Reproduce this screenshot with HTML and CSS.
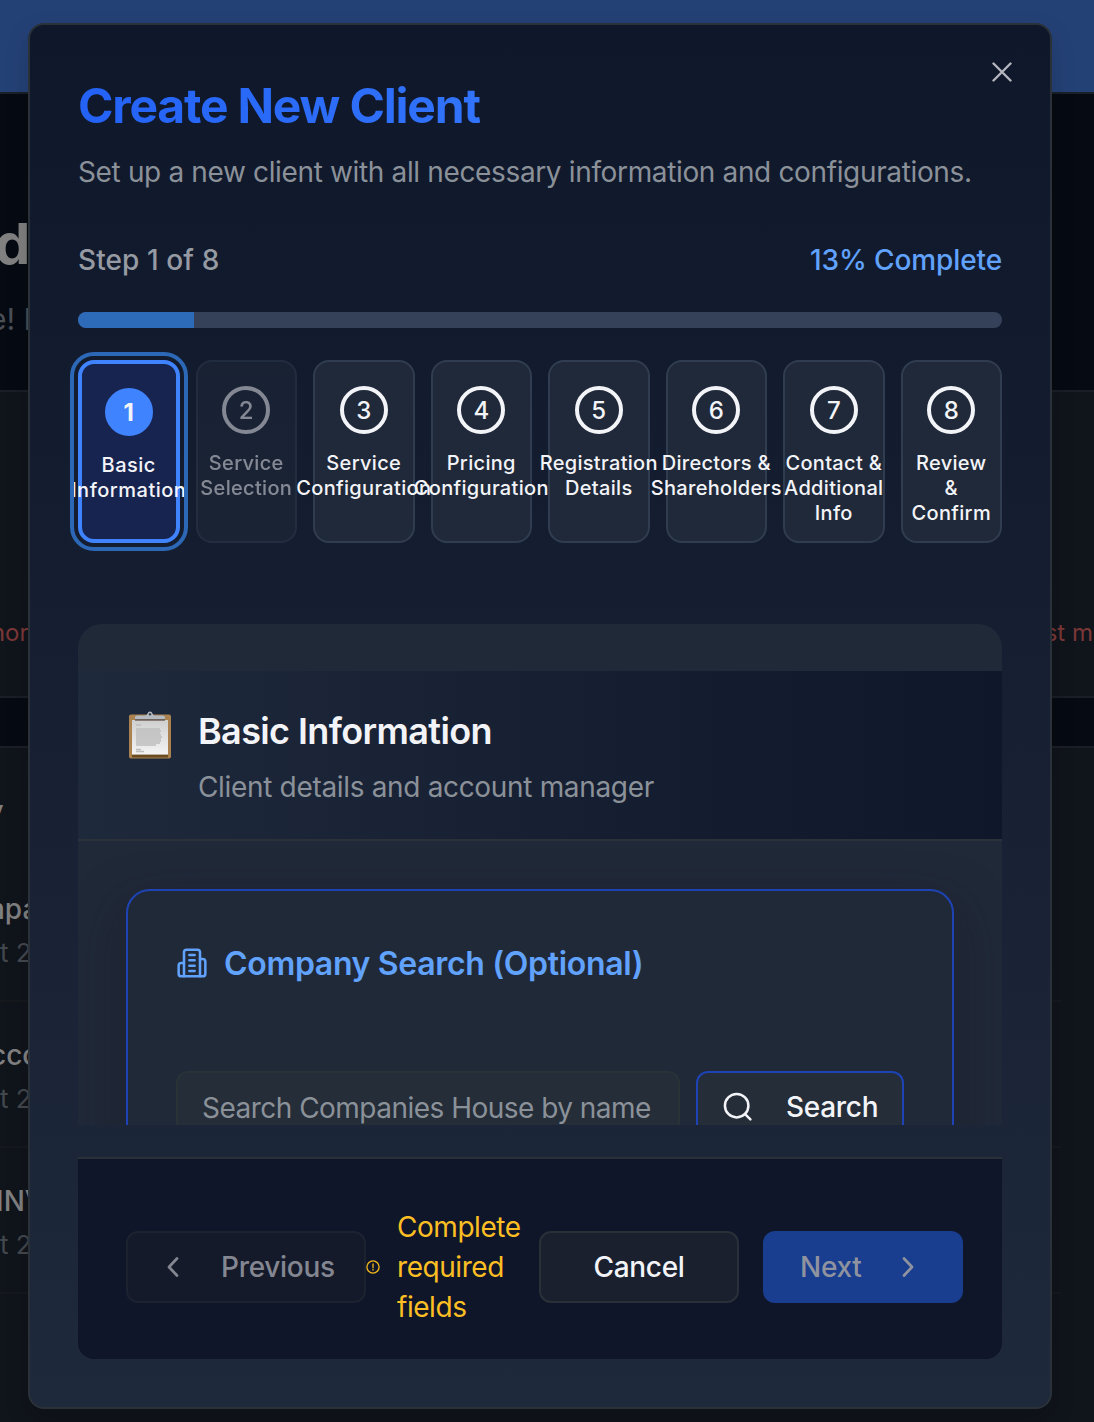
FILE: index.html
```html
<!DOCTYPE html>
<html lang="en">
<head>
<meta charset="utf-8">
<title>Create New Client</title>
<link rel="stylesheet" href="styles.css">
</head>
<body>
<div class="page" aria-hidden="true">
  <div class="page-top"></div>
  <div class="page-intro">
    <div class="page-title">d</div>
    <div class="page-sub">e! H</div>
  </div>
  <div class="page-stats">
    <span class="trend-left">mor</span>
    <span class="trend-right">st m</span>
  </div>
  <div class="page-list">
    <div class="list-title">y</div>
    <div class="list-row"><div class="row-name n1">mpa</div><div class="row-date">t 2</div></div>
    <div class="list-row"><div class="row-name n2">cco</div><div class="row-date">t 2</div></div>
    <div class="list-row"><div class="row-name n3">INV</div><div class="row-date">t 2</div></div>
  </div>
</div>

<div class="modal" role="dialog">
  <button class="close" aria-label="Close"><svg width="20" height="20" viewBox="0 0 20 20"><path d="M1.5 1.5l17 17M18.5 1.5l-17 17"/></svg></button>
  <h1 class="title"><span>Create New Client</span></h1>
  <p class="lead">Set up a new client with all necessary information and configurations.</p>
  <div class="progress-text"><span class="step-count">Step 1 of 8</span><span class="percent">13% Complete</span></div>
  <div class="bar"><div class="bar-fill" style="width:12.5%"></div></div>
  <div class="steps">
    <div class="step active"><b class="num">1</b><div class="label">Basic<br>Information</div></div>
    <div class="step disabled"><b class="num">2</b><div class="label">Service<br>Selection</div></div>
    <div class="step"><b class="num">3</b><div class="label">Service<br>Configuration</div></div>
    <div class="step"><b class="num">4</b><div class="label">Pricing<br>Configuration</div></div>
    <div class="step"><b class="num">5</b><div class="label">Registration<br>Details</div></div>
    <div class="step"><b class="num">6</b><div class="label">Directors &amp;<br>Shareholders</div></div>
    <div class="step"><b class="num">7</b><div class="label">Contact &amp;<br>Additional<br>Info</div></div>
    <div class="step"><b class="num">8</b><div class="label">Review<br>&amp;<br>Confirm</div></div>
  </div>

  <div class="form-scroll">
    <div class="section-head">
      <svg class="clipboard" width="44" height="50" viewBox="0 0 44 50">
        <defs><linearGradient id="paper" x1="0" y1="0" x2="0" y2="1"><stop offset="0" stop-color="#cfcfcf"/><stop offset="1" stop-color="#f4f4f4"/></linearGradient></defs>
        <rect x="1" y="3.500" width="42" height="44" rx="2" fill="#a98250"/>
        <rect x="4" y="43.500" width="36" height="3" fill="#6b4c22"/>
        <rect x="4" y="9" width="36" height="34.500" fill="url(#paper)"/>
        <path d="M8 14h5M8 18h24M8 20h25M8 22h24M8 24h25M8 26h26M8 28h25M8 30h25M8 32h24M8 34h20M8 38.500h5M8 40.500h8" stroke="#bdbdbd" stroke-width="1.300"/>
        <path d="M7 9V6.500q0-2 3-2h7q2 0 2.500-2a2.600 2.600 0 0 1 5 0q.5 2 2.500 2h7q3 0 3 2V9z" fill="#b4bac0"/>
        <path d="M7 8.800h30" stroke="#6f6259" stroke-width="1.800"/>
        <circle cx="22" cy="3.200" r="1.200" fill="#39434d"/>
      </svg>
      <div>
        <h2 class="section-title">Basic Information</h2>
        <p class="section-sub">Client details and account manager</p>
      </div>
    </div>
    <div class="search-card">
      <h3 class="card-title">
        <svg width="32" height="32" viewBox="0 0 24 24" class="line-icon"><path d="M6 22V4a2 2 0 0 1 2-2h8a2 2 0 0 1 2 2v18Z"/><path d="M6 12H4a2 2 0 0 0-2 2v6a2 2 0 0 0 2 2h2M18 9h2a2 2 0 0 1 2 2v9a2 2 0 0 1-2 2h-2M10 6h4M10 10h4M10 14h4M10 18h4"/></svg>
        <span>Company Search (Optional)</span>
      </h3>
      <div class="search-row">
        <div class="input"><span>Search Companies House by name</span></div>
        <div class="search-btn"><svg width="32" height="32" viewBox="0 0 24 24" class="line-icon"><circle cx="11" cy="11" r="8.800"/><path d="m21.300 21.300-4-4"/></svg><span>Search</span></div>
      </div>
    </div>
  </div>

  <div class="footer">
    <button class="btn prev"><svg width="12" height="20" viewBox="0 0 12 20"><path d="M10 1.500L2 10l8 8.500"/></svg><span>Previous</span></button>
    <svg class="warn-icon" width="14" height="14" viewBox="0 0 14 14"><circle cx="7" cy="7" r="6.100"/><path d="M7 4v3.400M7 9.200v.9"/></svg>
    <div class="warn">Complete required fields</div>
    <button class="btn cancel"><span>Cancel</span></button>
    <button class="btn next"><span>Next</span><svg width="12" height="20" viewBox="0 0 12 20"><path d="M2 1.500L10 10l-8 8.500"/></svg></button>
  </div>
</div>
</body>
</html>
```

FILE: styles.css
```css
* { box-sizing: border-box; }
body { margin: 0; width: 1094px; height: 1422px; overflow: hidden; position: relative; background: #060a12; font-family: Inter, "Liberation Sans", sans-serif; color: #f3f4f8; }
h1, h2, h3, p { margin: 0; }
button { font: inherit; letter-spacing: inherit; color: inherit; padding: 0; }

.page { height: 1422px; overflow: hidden; white-space: nowrap; }
.page-top { height: 94px; background: #244176; border-bottom: 2px solid #1b1f27; }
.page-intro { height: 296px; padding-top: 114px; }
.page-title { font-size: 56px; font-weight: 700; line-height: 72px; color: #808080; margin-left: -5px; }
.page-sub { font-size: 30px; line-height: 40px; color: #4a4e55; margin: 19px 0 0 -11px; }
.page-stats { height: 308px; border: solid #1a1e26; border-width: 2px 0; background: #10141b; display: flex; justify-content: space-between; padding-top: 225px; font-size: 24px; line-height: 32px; color: #7b3737; }
.trend-left { margin-left: -16px; }
.trend-right { margin-right: 1px; }
.page-list { margin-top: 48px; height: 700px; border-top: 2px solid #1a1e26; background: #10141b; padding: 46px 33px 0 0; }
.list-title { font-size: 28px; font-weight: 600; line-height: 34px; color: #808080; margin: 0 0 28px -13px; }
.list-row { height: 146px; border-bottom: 2px solid #15181d; padding-top: 33px; }
.row-name { font-size: 28px; font-weight: 500; line-height: 40px; color: #808080; }
.n1 { margin-left: -20px; }
.n2 { margin-left: -10px; }
.n3 { margin-left: -4px; }
.row-date { font-size: 26px; line-height: 36px; margin-top: 6px; color: #43474e; }

.modal { position: absolute; left: 28px; top: 23px; width: 1024px; height: 1386px; padding: 47px 48px; border: 2px solid #2a3139; border-radius: 16px; background: linear-gradient(180deg, #0f172a, #1e293b); box-shadow: 0 10px 24px rgba(0,0,0,.15); }
.close { position: absolute; right: 38px; top: 37px; width: 20px; height: 20px; background: none; border: 0; }
.close svg { display: block; fill: none; stroke: #b3b6bd; stroke-width: 2.400; stroke-linecap: round; }
.title { font-size: 48px; line-height: 67px; font-weight: 700; letter-spacing: -1.200px; height: 66px; white-space: nowrap; color: #2b6af8; }
.title span { background: linear-gradient(90deg, #2362f5, #3273fb); -webkit-background-clip: text; background-clip: text; color: transparent; }
.lead { margin-top: 14px; font-size: 28px; line-height: 41px; height: 40px; letter-spacing: -.355px; color: #8b9199; white-space: nowrap; }
.progress-text { margin-top: 48px; display: flex; justify-content: space-between; font-size: 28px; line-height: 41px; height: 40px; font-weight: 500; }
.step-count { color: #969ba3; letter-spacing: .1px; }
.percent { color: #60a2fc; letter-spacing: -.1px; }
.bar { margin-top: 32px; height: 16px; border-radius: 8px; background: #354158; overflow: hidden; }
.bar-fill { height: 16px; background: #2d6ab8; }

.steps { margin-top: 32px; display: grid; grid-template-columns: repeat(8, minmax(0, 1fr)); gap: 16px; height: 183px; }
.step { border: 2px solid #303d51; border-radius: 16px; background: #202939; padding-top: 24px; display: flex; flex-direction: column; align-items: center; }
.num { width: 48px; height: 48px; flex: none; border: 4px solid #f3f4f8; border-radius: 50%; font-size: 24px; font-weight: 500; line-height: 42px; text-align: center; }
.label { margin-top: 17px; font-size: 20px; line-height: 25px; font-weight: 500; letter-spacing: .32px; text-align: center; white-space: nowrap; }
.active { border: 4px solid #3f83fe; background: #182450; outline: 4px solid #2c68b6; outline-offset: 4px; }
.active .num { border-color: #3f83fe; background: #3f83fe; font-weight: 700; }
.active .label { letter-spacing: .5px; }
.disabled { opacity: .5; }

.form-scroll { margin-top: 81px; height: 501px; overflow: hidden; padding-top: 47px; border-radius: 24px 24px 0 0; background: #202938; }
.section-head { height: 170px; display: flex; padding: 40px 50px 0; border-bottom: 2px solid #2a3138; background: linear-gradient(90deg, #1e293b, #0f172a); }
.clipboard { margin-right: 26px; flex: none; }
.section-title { font-size: 36px; line-height: 41px; height: 40px; font-weight: 600; letter-spacing: -.62px; }
.section-sub { margin-top: 16px; font-size: 28px; line-height: 41px; letter-spacing: -.33px; color: #8b9199; }
.search-card { margin: 48px 48px 0; height: 360px; border: 2px solid #1d43b4; border-radius: 24px; padding: 48px 48px 0; background: #202938; box-shadow: 0 20px 50px rgba(26,26,38,.55); }
.card-title { display: flex; align-items: center; gap: 16px; height: 48px; font-size: 32px; font-weight: 600; letter-spacing: -.33px; color: #60a2fc; }
.line-icon { fill: none; stroke: currentColor; stroke-width: 1.900; stroke-linecap: round; stroke-linejoin: round; flex: none; }
.search-row { margin-top: 84px; display: flex; gap: 16px; font-size: 28px; }
.input { width: 504px; height: 72px; padding-left: 24px; border: 2px solid #293237; border-radius: 12px; background: #242d38; color: #8b9199; line-height: 70px; letter-spacing: -.52px; white-space: nowrap; }
.search-btn { width: 208px; height: 72px; display: flex; align-items: center; gap: 32px; padding-left: 24px; border: 2px solid #1d43b4; border-radius: 12px; background: #242d38; font-weight: 500; letter-spacing: -.3px; }

.footer { margin-top: 32px; height: 202px; display: flex; align-items: center; padding: 15px 0 0 48px; border-top: 2px solid #2a3038; border-radius: 0 0 16px 16px; background: #101629; font-size: 28px; line-height: 40px; letter-spacing: -.3px; }
.btn { flex: none; height: 72px; display: flex; align-items: center; border-radius: 12px; font-weight: 500; }
.btn svg { fill: none; stroke: currentColor; stroke-width: 2.700; stroke-linecap: round; stroke-linejoin: round; }
.prev { width: 240px; padding-left: 39px; gap: 42px; border: 2px solid #1c2230; background: #151a2b; color: #848791; }
.warn-icon { flex: none; fill: none; stroke: #f6b91c; stroke-width: 1.300; stroke-linecap: round; }
.warn { flex: none; width: 142px; margin-left: 17px; color: #fbbf24; letter-spacing: -.45px; }
.cancel { width: 200px; justify-content: center; border: 2px solid #2a3038; background: #1a202e; }
.next { width: 200px; margin-left: 24px; padding-left: 37px; gap: 41px; border: 0; background: #193d8f; color: #8e939f; }
```
